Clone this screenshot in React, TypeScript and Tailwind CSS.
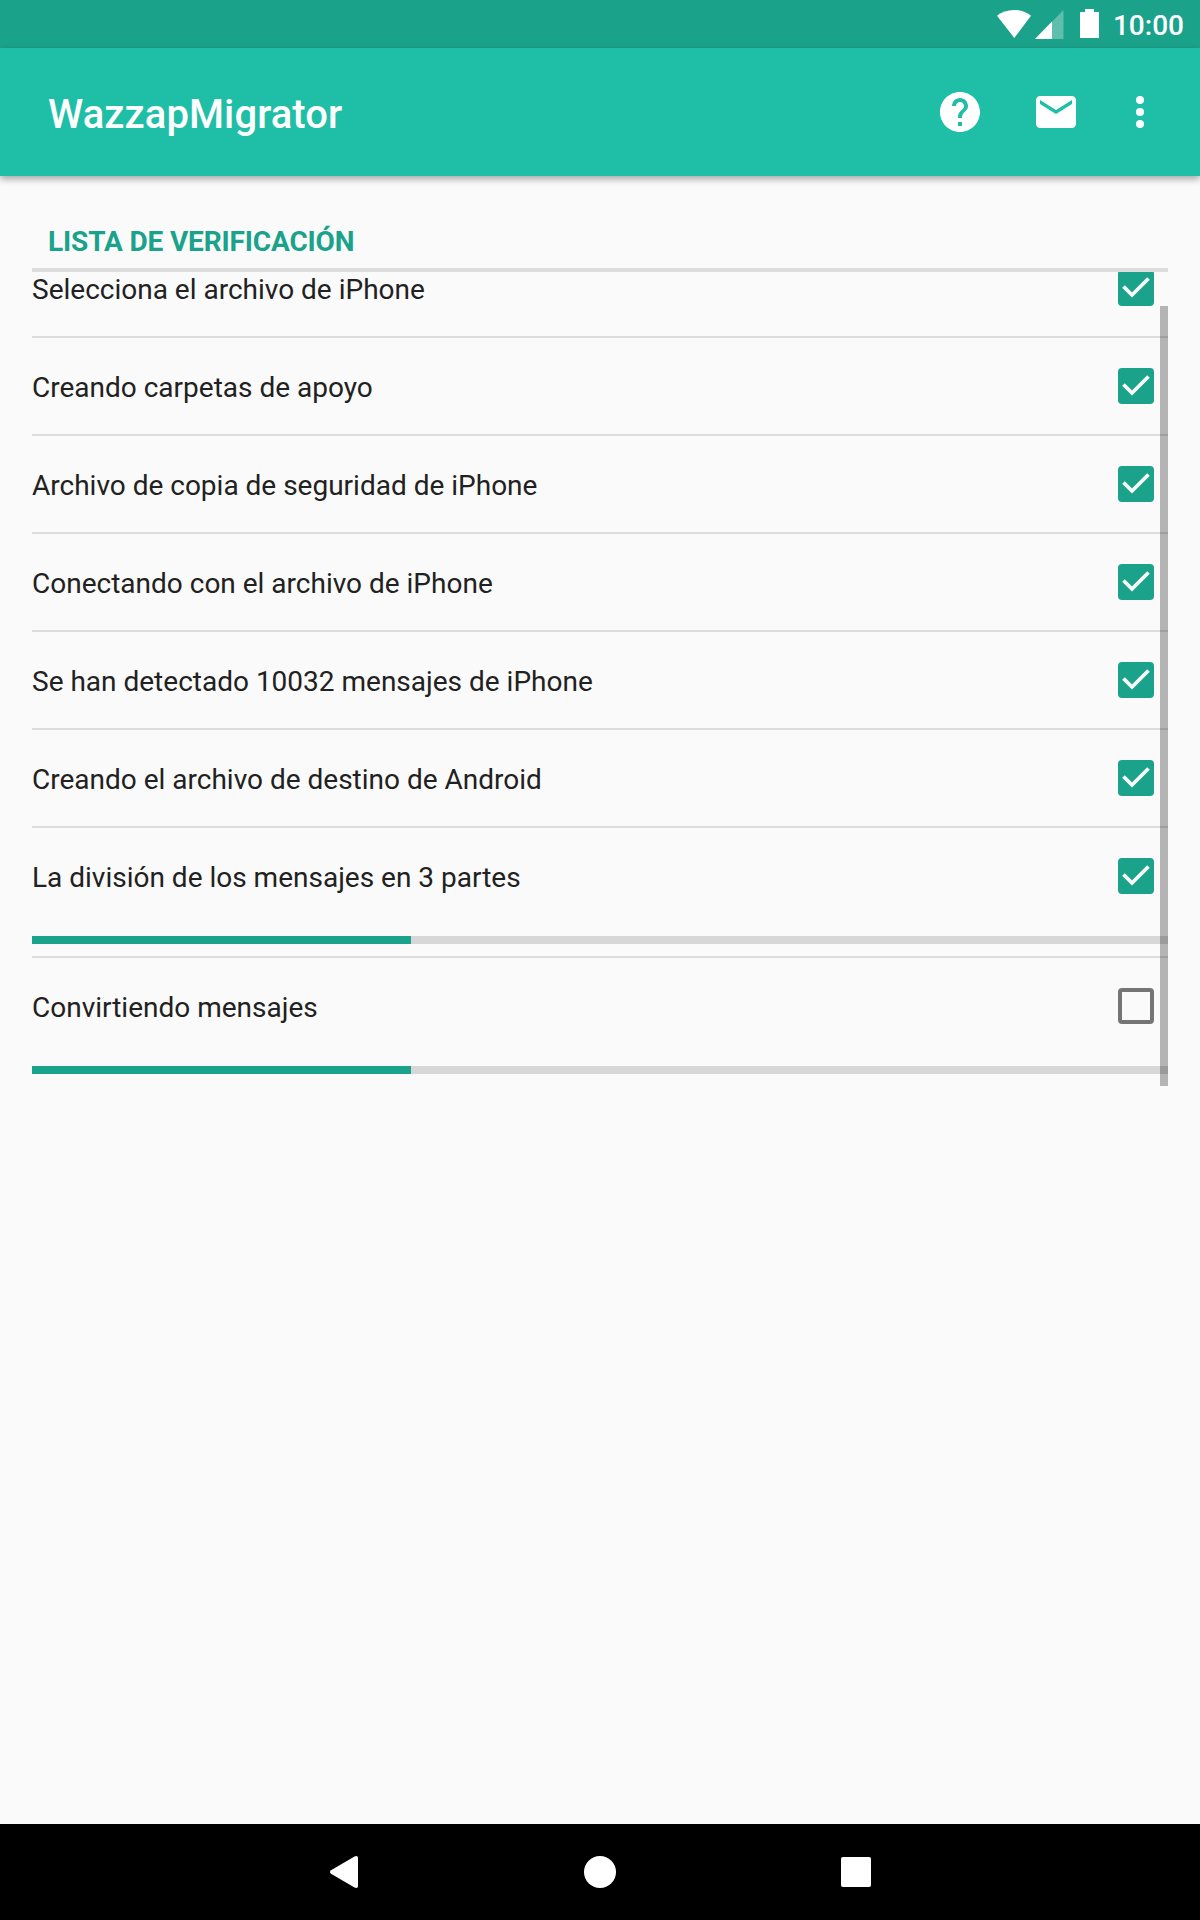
type Task = {
  label: string;
  done: boolean;
  progress?: number;
};

const tasks: Task[] = [
  { label: "Selecciona el archivo de iPhone", done: true },
  { label: "Creando carpetas de apoyo", done: true },
  { label: "Archivo de copia de seguridad de iPhone", done: true },
  { label: "Conectando con el archivo de iPhone", done: true },
  { label: "Se han detectado 10032 mensajes de iPhone", done: true },
  { label: "Creando el archivo de destino de Android", done: true },
  { label: "La división de los mensajes en 3 partes", done: true, progress: 33.33 },
  { label: "Convirtiendo mensajes", done: false, progress: 33.33 },
];

const StatusBar = () => (
  <div className="flex h-12 shrink-0 items-center justify-end bg-[#1ba28b] pr-4 text-white">
    <svg width="34" height="28" viewBox="0 0 34 28" fill="currentColor">
      <path d="M0 5.8C4.5 2.2 10.500 0 17 0s12.500 2.200 17 5.800L17.300 28z" />
    </svg>
    <svg className="mt-px ml-1" width="29" height="29" viewBox="0 0 29 29" fill="currentColor">
      <path d="M0 29 28.500 0v29z" opacity="0.3" />
      <path d="M0 29 17 11.600V29z" />
    </svg>
    <svg className="mb-px ml-4" width="19" height="29" viewBox="0 0 19 29" fill="currentColor">
      <path d="M5 0h9v3h5v26H0V3h5z" />
    </svg>
    <span className="ml-3.5 pt-[3px] text-[28px] leading-8 font-medium">10:00</span>
  </div>
);

const AppBar = () => (
  <header className="relative z-10 flex h-32 shrink-0 items-center bg-[#1fbea6] pr-9 pl-12 text-white shadow-[0_3px_7px_rgba(0,0,0,0.35)]">
    <h1 className="flex-1 pt-1.5 text-[40px] leading-12 font-medium tracking-[0.1px]">WazzapMigrator</h1>
    <svg width="48" height="48" viewBox="0 0 24 24" fill="currentColor">
      <path d="M12 2C6.480 2 2 6.480 2 12s4.480 10 10 10 10-4.480 10-10S17.520 2 12 2zm1 17h-2v-2h2v2zm2.070-7.750l-.9.920C13.450 12.900 13 13.500 13 15h-2v-.5c0-1.100.45-2.100 1.170-2.830l1.240-1.260c.37-.36.59-.86.59-1.410 0-1.100-.9-2-2-2s-2 .9-2 2H8c0-2.210 1.790-4 4-4s4 1.790 4 4c0 .88-.36 1.680-.93 2.250z" />
    </svg>
    <svg className="ml-12" width="48" height="48" viewBox="0 0 24 24" fill="currentColor">
      <path d="M20 4H4c-1.100 0-1.990.9-1.990 2L2 18c0 1.100.9 2 2 2h16c1.100 0 2-.9 2-2V6c0-1.100-.9-2-2-2zm0 4l-8 5-8-5V6l8 5 8-5v2z" />
    </svg>
    <svg className="ml-9" width="48" height="48" viewBox="0 0 24 24" fill="currentColor">
      <circle cx="12" cy="6" r="2" />
      <circle cx="12" cy="12" r="2" />
      <circle cx="12" cy="18" r="2" />
    </svg>
  </header>
);

const Checkbox = ({ checked }: { checked: boolean }) =>
  checked ? (
    <span className="flex size-9 items-center justify-center rounded bg-[#1ba28b]">
      <svg width="36" height="36" viewBox="0 0 36 36" fill="none" stroke="#fafafa" strokeWidth="3.7">
        <path d="M5.500 16.500 14 25 30.500 8.500" />
      </svg>
    </span>
  ) : (
    <span className="size-9 rounded border-4 border-[#757575]" />
  );

const TaskRow = ({ label, done, progress }: Task) => (
  <li className="border-b-2 border-[#dcdcdc] last:border-b-0">
    <div className="flex h-24 items-center justify-between pr-3.5">
      <span className="pt-1 text-[28px] leading-8 text-[#212121]">{label}</span>
      <Checkbox checked={done} />
    </div>
    {progress !== undefined && (
      <div className="py-3">
        <div className="h-2 bg-[#d7d7d7]">
          <div className="h-2 bg-[#1ba28b]" style={{ width: `${progress}%` }} />
        </div>
      </div>
    )}
  </li>
);

const NavBar = () => (
  <nav className="flex h-24 shrink-0 items-center justify-center gap-[208px] bg-black text-white">
    <svg width="48" height="48" viewBox="0 0 48 48" fill="currentColor">
      <path d="M11 22.200 34.500 8.400Q38 7 38 10V38Q38 41 34.500 39.600L11 25.800Q9 24 11 22.200z" />
    </svg>
    <svg width="48" height="48" viewBox="0 0 48 48" fill="currentColor">
      <circle cx="24" cy="24" r="16" />
    </svg>
    <svg width="48" height="48" viewBox="0 0 48 48" fill="currentColor">
      <rect x="9" y="9" width="30" height="30" rx="2" />
    </svg>
  </nav>
);

export default function App() {
  return (
    <div className="flex h-[1920px] w-[1200px] flex-col overflow-hidden bg-[#fafafa] font-[Roboto,sans-serif]">
      <StatusBar />
      <AppBar />
      <main className="flex-1 px-8 pt-11">
        <h2 className="h-[52px] border-b-4 border-[#dcdcdc] px-4 pt-1 text-[28px] leading-9 font-bold tracking-[-0.14px] text-[#1ba28b]">
          LISTA DE VERIFICACIÓN
        </h2>
        {/* List is scrolled down by a third of a row */}
        <div className="relative h-[814px] overflow-hidden">
          <ul className="-mt-8">
            {tasks.map((task) => (
              <TaskRow key={task.label} {...task} />
            ))}
          </ul>
          <div className="absolute right-0 bottom-0 h-[780px] w-2 bg-black/28" />
        </div>
      </main>
      <NavBar />
    </div>
  );
}
